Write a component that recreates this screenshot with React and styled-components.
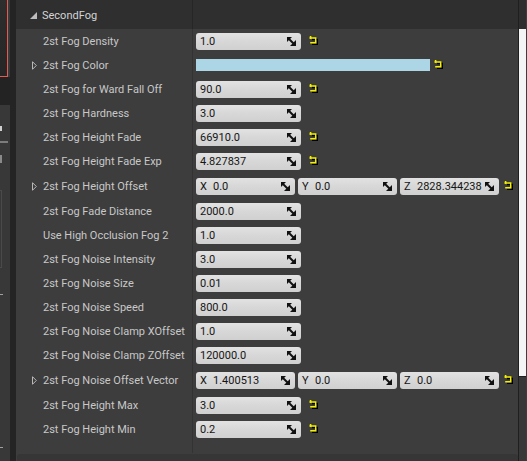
import React from 'react';
import styled, { createGlobalStyle } from 'styled-components';

const Global = createGlobalStyle`
  html, body { margin: 0; padding: 0; background: #3d3d3d; }
  body { font-family: Roboto, "Noto Sans", "DejaVu Sans", sans-serif; }
  * { box-sizing: border-box; }
`;

const Page = styled.div`
  display: flex;
  width: 527px;
  height: 461px;
  overflow: hidden;
  background: #3d3d3d;
`;

/* ---------- left sidebar ---------- */
const Sidebar = styled.div`
  display: flex;
  width: 16px;
  flex: none;
  background: #242424;
`;
const SideCol = styled.div`
  display: flex;
  flex-direction: column;
  width: 10px;
`;
const Thumb = styled.div`
  height: 77px;
  width: 10px;
  background: #393939;
  display: flex;
`;
const ThumbImage = styled.div`
  width: 8px;
  height: 77px;
  background: linear-gradient(180deg, #2e2e2e, #262626);
  border-right: 1px solid #e25c55;
  border-bottom: 1px solid #e25c55;
`;
const SideGap = styled.div`
  height: 28px;
  background: #232323;
`;
const SidePanel = styled.div`
  flex: 1;
  background: #383838;
  display: flex;
  flex-direction: column;
`;
const Mark = styled.div`
  flex: none;
  margin-top: ${(p) => p.$top}px;
  width: ${(p) => p.$w}px;
  height: ${(p) => p.$h}px;
  background: ${(p) => p.$c || 'transparent'};
  border: ${(p) => (p.$border ? `1px solid ${p.$border}` : 'none')};
  border-left: none;
`;
const SideStrip = styled.div`
  width: 6px;
  background: #242424;
`;

/* ---------- main panel ---------- */
const Main = styled.div`
  width: 503px;
  flex: none;
  display: flex;
  flex-direction: column;
  background: #3d3d3d;
  border-right: 1px solid #1f1f1f;
`;
const Header = styled.div`
  display: grid;
  grid-template-columns: 176px 1px 1fr;
  height: 29px;
  background: #2f2f2f;
  flex: none;
`;
const HeaderTitle = styled.div`
  display: flex;
  align-items: center;
  padding-left: 14px;
  gap: 5px;
  color: #d4d4d4;
  font-size: 11px;
  padding-top: 1px;
`;
const Divider = styled.div`
  background: ${(p) => (p.$dark ? '#262626' : '#333333')};
`;
const Body = styled.div`
  flex: 1;
  display: flex;
  flex-direction: column;
`;
const Row = styled.div`
  display: grid;
  grid-template-columns: 176px 1px 1fr;
  height: ${(p) => (p.$tall ? 26 : 24)}px;
  flex: none;
`;
const LabelCell = styled.div`
  display: flex;
  align-items: center;
  padding-left: 16px;
  color: #c8c8c8;
  font-size: 11px;
  white-space: nowrap;
`;
const Expander = styled.span`
  display: inline-flex;
  width: 11px;
  justify-content: flex-start;
  align-items: center;
`;
const ValueCell = styled.div`
  display: flex;
  align-items: center;
  padding-left: 3px;
`;
const Filler = styled.div`
  flex: 1;
  display: grid;
  grid-template-columns: 176px 1px 1fr;
`;
const NumField = styled.div`
  display: flex;
  align-items: center;
  justify-content: space-between;
  width: ${(p) => p.$w}px;
  height: 17px;
  border-radius: 3px;
  background: linear-gradient(180deg, #e2e2e2 0%, #d8d8d8 45%, #d0d0d0 100%);
  color: #151515;
  font-size: 11px;
  padding: 0 5px 0 4px;
  flex: none;
`;
const FieldText = styled.span`
  display: flex;
  align-items: center;
  white-space: nowrap;
  padding-top: 1px;
`;
const Axis = styled.span`
  width: 13px;
  flex: none;
`;
const VecGroup = styled.div`
  display: flex;
  gap: 3px;
`;
const ColorBar = styled.div`
  width: 234px;
  height: 12px;
  background: #acd5e5;
  flex: none;
`;
const ResetWrap = styled.span`
  display: inline-flex;
  margin-left: ${(p) => p.$gap}px;
  margin-top: -1px;
`;
const BottomBar = styled.div`
  height: 7px;
  flex: none;
  margin-top: 1px;
  background: #363636;
  border-top-left-radius: 3px;
  border-top-right-radius: 3px;
  margin-left: 1px;
`;

/* ---------- scrollbar ---------- */
const Scroll = styled.div`
  width: 7px;
  flex: none;
  display: flex;
  flex-direction: column;
  background: #383838;
`;
const ScrollTop = styled.div`
  height: 29px;
  background: #2f2f2f;
`;
const ScrollThumb = styled.div`
  height: 348px;
  background: #f4f4f4;
  border-bottom: 1px solid #1f1f1f;
`;

/* ---------- icons ---------- */
const SpinIcon = () => (
  <svg width="9" height="9" viewBox="0 0 9 9">
    <polygon points="0,0 5,0 0,5" fill="#111" />
    <polygon points="9,9 3,9 9,3" fill="#111" />
    <line x1="1" y1="1" x2="7.5" y2="7.5" stroke="#111" strokeWidth="2" />
  </svg>
);

const ResetIcon = () => (
  <svg width="9" height="9" viewBox="0 0 9 9">
    <path d="M2.5 0.5 V2.5 H7.5 V7.5 H2" fill="none" stroke="#000" strokeWidth="1.4" transform="translate(1,1)" />
    <path d="M1.5 0 V2 H6.7 V6.8 H1.2" fill="none" stroke="#f4f000" strokeWidth="1.4" />
    <polygon points="0,2 2.4,0.2 2.4,3.6" fill="#f4f000" />
  </svg>
);

const ExpandIcon = () => (
  <svg width="5" height="9" viewBox="0 0 5 9">
    <path d="M0.5 0.7 L4.3 4.5 L0.5 8.3 Z" fill="none" stroke="#b8b8b8" strokeWidth="1" />
  </svg>
);

const CollapseIcon = () => (
  <svg width="7" height="7" viewBox="0 0 7 7">
    <polygon points="7,0 7,7 0,7" fill="#bdbdbd" />
  </svg>
);

/* ---------- data ---------- */
const rows = [
  { label: '2st Fog Density', value: '1.0', reset: true },
  { label: '2st Fog Color', type: 'color', expand: true, reset: true },
  { label: '2st Fog for Ward Fall Off', value: '90.0', reset: true },
  { label: '2st Fog Hardness', value: '3.0' },
  { label: '2st Fog Height Fade', value: '66910.0', reset: true },
  { label: '2st Fog Height Fade Exp', value: '4.827837', reset: true },
  { label: '2st Fog Height Offset', type: 'vec', expand: true, values: ['0.0', '0.0', '2828.344238'], reset: true },
  { label: '2st Fog Fade Distance', value: '2000.0' },
  { label: 'Use High Occlusion Fog 2', value: '1.0' },
  { label: '2st Fog Noise Intensity', value: '3.0' },
  { label: '2st Fog Noise Size', value: '0.01' },
  { label: '2st Fog Noise Speed', value: '800.0' },
  { label: '2st Fog Noise Clamp XOffset', value: '1.0' },
  { label: '2st Fog Noise Clamp ZOffset', value: '120000.0' },
  { label: '2st Fog Noise Offset Vector', type: 'vec', expand: true, values: ['1.400513', '0.0', '0.0'], reset: true },
  { label: '2st Fog Height Max', value: '3.0', reset: true },
  { label: '2st Fog Height Min', value: '0.2', reset: true },
];

const Field = ({ w, axis, value }) => (
  <NumField $w={w}>
    <FieldText>
      {axis && <Axis>{axis}</Axis>}
      {value}
    </FieldText>
    <SpinIcon />
  </NumField>
);

const Value = ({ row }) => {
  if (row.type === 'color') {
    return (
      <>
        <ColorBar />
        {row.reset && <ResetWrap $gap={4}><ResetIcon /></ResetWrap>}
      </>
    );
  }
  if (row.type === 'vec') {
    return (
      <>
        <VecGroup>
          {['X', 'Y', 'Z'].map((a, i) => (
            <Field key={a} w={99} axis={a} value={row.values[i]} />
          ))}
        </VecGroup>
        {row.reset && <ResetWrap $gap={5}><ResetIcon /></ResetWrap>}
      </>
    );
  }
  return (
    <>
      <Field w={105} value={row.value} />
      {row.reset && <ResetWrap $gap={8}><ResetIcon /></ResetWrap>}
    </>
  );
};

export default function App() {
  return (
    <Page>
      <Global />
      <Sidebar>
        <SideCol>
          <Thumb><ThumbImage /></Thumb>
          <SideGap />
          <SidePanel>
            <Mark $top={21} $w={2} $h={5} $c="#d0d0d0" />
            <Mark $top={10} $w={8} $h={2} $c="#7c7c7c" />
            <Mark $top={12} $w={2} $h={8} $c="#8a8a8a" />
            <Mark $top={27} $w={2} $h={78} $border="#4a4a4a" />
            <Mark $top={26} $w={3} $h={1} $c="#a0a0a0" />
            <Mark $top={152} $w={3} $h={1} $c="#a0a0a0" />
          </SidePanel>
        </SideCol>
        <SideStrip />
      </Sidebar>
      <Main>
        <Header>
          <HeaderTitle>
            <CollapseIcon />
            SecondFog
          </HeaderTitle>
          <Divider $dark />
          <div />
        </Header>
        <Body>
          {rows.map((r) => (
            <Row key={r.label} $tall={r.type === 'vec'}>
              <LabelCell>
                <Expander>{r.expand && <ExpandIcon />}</Expander>
                {r.label}
              </LabelCell>
              <Divider />
              <ValueCell>
                <Value row={r} />
              </ValueCell>
            </Row>
          ))}
          <Filler>
            <div />
            <Divider />
            <div />
          </Filler>
        </Body>
        <BottomBar />
      </Main>
      <Scroll>
        <ScrollTop />
        <ScrollThumb />
      </Scroll>
    </Page>
  );
}
